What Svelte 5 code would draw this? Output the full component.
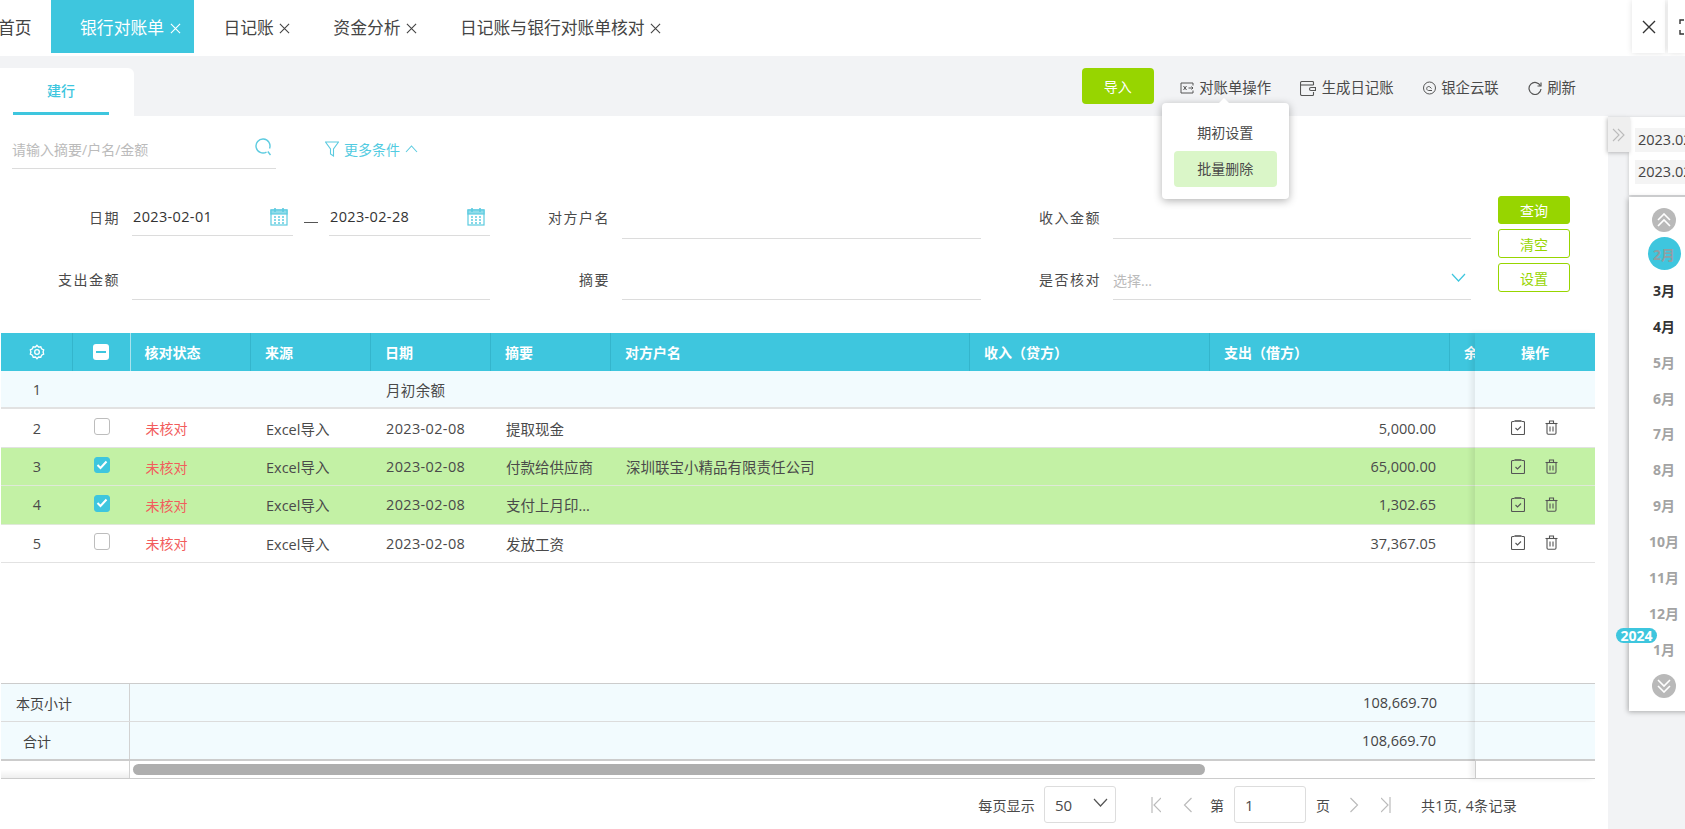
<script lang="ts">
  const tabs = [
    { name: '首页', closable: false },
    { name: '银行对账单', closable: true, active: true },
    { name: '日记账', closable: true },
    { name: '资金分析', closable: true },
    { name: '日记账与银行对账单核对', closable: true }
  ];

  const columns = [
    { label: '', w: 72 },
    { label: '', w: 57.5 },
    { label: '核对状态', w: 120.5 },
    { label: '来源', w: 120 },
    { label: '日期', w: 120 },
    { label: '摘要', w: 120 },
    { label: '对方户名', w: 359 },
    { label: '收入（贷方）', w: 240 },
    { label: '支出（借方）', w: 240 },
    { label: '余额', w: 240 }
  ];
  const gridCols = columns.map((c) => c.w + 'px').join(' ');

  const rows = [
    { no: 1, kind: 'opening', h: 38, date: '', summary: '月初余额' },
    { no: 2, h: 39, date: '2023-02-08', summary: '提取现金', party: '', out: '5,000.00' },
    { no: 3, h: 38, checked: true, date: '2023-02-08', summary: '付款给供应商', party: '深圳联宝小精品有限责任公司', out: '65,000.00' },
    { no: 4, h: 38.5, checked: true, date: '2023-02-08', summary: '支付上月印...', party: '', out: '1,302.65' },
    { no: 5, h: 38, date: '2023-02-08', summary: '发放工资', party: '', out: '37,367.05' }
  ];

  const months = ['2月', '3月', '4月', '5月', '6月', '7月', '8月', '9月', '10月', '11月', '12月', '1月'];
</script>

{#snippet closeIcon(size)}
  <svg class="close" width={size} height={size} viewBox="0 0 12 12" fill="none" stroke="currentColor" stroke-width="1.2">
    <path d="M1 1l10 10M11 1L1 11" />
  </svg>
{/snippet}

{#snippet calendar()}
  <svg width="18" height="19" viewBox="0 0 18 19" fill="none" stroke="#5ccbe0" stroke-width="1.2">
    <rect x="1" y="3" width="16" height="15" fill="#fff" />
    <rect x="1" y="3" width="16" height="4" fill="#8edcea" />
    <path d="M5 1v4M13 1v4" stroke-width="1.6" />
    <path d="M4 10h2M8 10h2M12 10h2M4 13h2M8 13h2M12 13h2M4 16h2M8 16h2M12 16h2" stroke-width="1.4" />
  </svg>
{/snippet}

{#snippet clipboard()}
  <svg width="14" height="15" viewBox="0 0 14 15" fill="none" stroke="#555" stroke-width="1.1">
    <path d="M3.5 1.5H1.5a1 1 0 0 0-1 1v11a1 1 0 0 0 1 1h11a1 1 0 0 0 1-1v-11a1 1 0 0 0-1-1h-2" />
    <path d="M3.5 1h7" stroke-width="1.6" />
    <path d="M4.5 8l2 2 3.5-3.5" />
  </svg>
{/snippet}

{#snippet trash()}
  <svg width="13" height="15" viewBox="0 0 13 15" fill="none" stroke="#555" stroke-width="1.1">
    <path d="M0.5 3.5h12" />
    <path d="M4.5 3.5V1h4v2.5" />
    <path d="M2 3.5v9.5a1.2 1.2 0 0 0 1.2 1.2h6.6A1.2 1.2 0 0 0 11 13V3.5" />
    <path d="M5 6.5v5M8 6.5v5" />
  </svg>
{/snippet}

<div class="page">
  <header class="tabbar">
    <nav class="tabs">
      {#each tabs as tab}
        <div class="tab" class:active={tab.active} class:plain={!tab.closable}>
          <span>{tab.name}</span>
          {#if tab.closable}{@render closeIcon(11)}{/if}
        </div>
      {/each}
    </nav>
    <div class="win-btns">
      <div class="win-btn">
        <svg width="16" height="16" viewBox="0 0 16 16" fill="none" stroke="#333" stroke-width="1.4"><path d="M2 2l12 12M14 2L2 14" /></svg>
      </div>
      <div class="win-btn wide">
        <svg width="16" height="16" viewBox="0 0 16 16" fill="none" stroke="#333" stroke-width="1.4"><path d="M1 5V1h4M11 1h4v4M15 11v4h-4M5 15H1v-4" /></svg>
      </div>
    </div>
  </header>

  <div class="toolbar">
    <div class="subtab"><div class="subtab-label">建行</div></div>
    <div class="actions">
      <button class="btn-import">导入</button>
      <div class="action has-menu">
        <svg width="14" height="12" viewBox="0 0 14 12" fill="none" stroke="#555" stroke-width="1"><path d="M13 3.500V1H1v10h12V8.500" /><path d="M3.500 4l3 4M6.500 4l-3 4" /><path d="M8.500 6H13M11.500 4.500L13 6l-1.500 1.500" /></svg>
        <span>对账单操作</span>
        <div class="menu">
          <div class="menu-item">期初设置</div>
          <div class="menu-item hover">批量删除</div>
        </div>
      </div>
      <div class="action">
        <svg width="16" height="15" viewBox="0 0 16 15" fill="none" stroke="#555" stroke-width="1.100"><path d="M13.500 4V1.500a1 1 0 0 0-1-1H2a1.500 1.500 0 0 0-1.500 1.500v11A1.500 1.500 0 0 0 2 14.500h10.500a1 1 0 0 0 1-1V11" /><path d="M0.500 4h13" /><path d="M15.500 6.500H11a1 1 0 0 0 0 3h4.500z" fill="#f2f3f5" /></svg>
        <span>生成日记账</span>
      </div>
      <div class="action">
        <svg width="13" height="14" viewBox="0 0 13 14" fill="none" stroke="#555" stroke-width="1"><circle cx="6.500" cy="7" r="6" /><path d="M9 9.500H5.500a2 2 0 1 1 1.500-3.500l1.500 1.500" /></svg>
        <span>银企云联</span>
      </div>
      <div class="action">
        <svg width="14" height="14" viewBox="0 0 14 14" fill="none" stroke="#555" stroke-width="1.200"><path d="M12.500 5A6 6 0 1 0 13 8" /><path d="M13 1.500V5H9.500" /></svg>
        <span>刷新</span>
      </div>
    </div>
  </div>

  <div class="content">
    <main class="main">
      <div class="search-row">
        <div class="search">
          <span>请输入摘要/户名/金额</span>
          <svg width="18" height="18" viewBox="0 0 18 18" fill="none" stroke="#5ccbe0" stroke-width="1.400"><path d="M11.500 14.060A7 7 0 1 1 14.580 10.390" /><path d="M12.800 13.500l2.700 3.500" /></svg>
        </div>
        <div class="more">
          <svg width="14" height="16" viewBox="0 0 14 16" fill="none" stroke="#5ccbe0" stroke-width="1.100"><path d="M0.500 1h13L8.500 8v7l-3-2V8z" /></svg>
          <span>更多条件</span>
          <svg width="13" height="8" viewBox="0 0 13 8" fill="none" stroke="#5ccbe0" stroke-width="1.100"><path d="M1 7l5.500-6L12 7" /></svg>
        </div>
      </div>

      <div class="form">
        <label class="lbl up">日期</label>
        <div class="dates">
          <div class="date-input"><span>2023-02-01</span>{@render calendar()}</div>
          <span class="dash"></span>
          <div class="date-input"><span>2023-02-28</span>{@render calendar()}</div>
        </div>
        <label class="lbl up">对方户名</label>
        <div class="field"></div>
        <label class="lbl up">收入金额</label>
        <div class="field"></div>
        <div class="form-btns">
          <button class="btn solid">查询</button>
          <button class="btn">清空</button>
          <button class="btn">设置</button>
        </div>

        <label class="lbl low">支出金额</label>
        <div class="field"></div>
        <label class="lbl low">摘要</label>
        <div class="field"></div>
        <label class="lbl low">是否核对</label>
        <div class="field select">
          <span>选择...</span>
          <svg width="15" height="9" viewBox="0 0 15 9" fill="none" stroke="#3ec6de" stroke-width="1.200"><path d="M1 1l6.500 7L14 1" /></svg>
        </div>
      </div>

      <div class="table">
        <div class="scroll-part">
          <div class="thead" style="grid-template-columns:{gridCols}">
            <div class="th center">
              <svg width="16" height="16" viewBox="0 0 24 24" fill="none" stroke="#fff" stroke-width="2"><circle cx="12" cy="12" r="3.500" /><path d="M12 2l2.300 2.600 3.400-.5 1.200 3.200 3.100 1.500-.9 3.200.9 3.300-3.100 1.400-1.200 3.200-3.400-.4L12 22l-2.300-2.500-3.400.4-1.200-3.200-3.100-1.400.9-3.300-.9-3.200 3.100-1.500 1.200-3.200 3.400.5z" /></svg>
            </div>
            <div class="th center light">
              <span class="check-head"></span>
            </div>
            {#each columns.slice(2) as col}
              <div class="th">{col.label}</div>
            {/each}
          </div>

          {#each rows as row}
            <div class="tr" class:opening={row.kind === 'opening'} class:selected={row.checked} style="grid-template-columns:{gridCols};height:{row.h}px">
              <div class="td center">{row.no}</div>
              <div class="td center">
                {#if row.kind !== 'opening'}
                  <span class="checkbox" class:on={row.checked}>
                    {#if row.checked}
                      <svg width="12" height="10" viewBox="0 0 12 10" fill="none" stroke="#fff" stroke-width="2"><path d="M1.500 5l3 3 6-6.500" /></svg>
                    {/if}
                  </span>
                {/if}
              </div>
              <div class="td status">{row.kind === 'opening' ? '' : '未核对'}</div>
              <div class="td">{row.kind === 'opening' ? '' : 'Excel导入'}</div>
              <div class="td date">{row.kind === 'opening' ? '月初余额' : row.date}</div>
              <div class="td">{row.kind === 'opening' ? '' : row.summary}</div>
              <div class="td">{row.party ?? ''}</div>
              <div class="td"></div>
              <div class="td amount">{row.out ?? ''}</div>
              <div class="td"></div>
            </div>
          {/each}

          <div class="spacer"></div>

          <div class="foot first">
            <div class="foot-label">本页小计</div>
            <div class="foot-amount">108,669.70</div>
          </div>
          <div class="foot second">
            <div class="foot-label indent">合计</div>
            <div class="foot-amount shifted">108,669.70</div>
          </div>
          <div class="scrollbar">
            <div class="scroll-corner"></div>
            <div class="scroll-track"><div class="scroll-thumb"></div></div>
          </div>
        </div>

        <div class="fixed-part">
          <div class="fixed-head">操作</div>
          {#each rows as row}
            <div class="fixed-row" class:opening={row.kind === 'opening'} class:selected={row.checked} style="height:{row.h}px">
              {#if row.kind !== 'opening'}
                {@render clipboard()}
                {@render trash()}
              {/if}
            </div>
          {/each}
          <div class="spacer"></div>
          <div class="fixed-foot first"></div>
          <div class="fixed-foot second"></div>
          <div class="fixed-scroll"></div>
        </div>
      </div>

      <div class="pager">
        <span class="per-page">每页显示</span>
        <div class="page-size">
          <span>50</span>
          <svg width="15" height="9" viewBox="0 0 15 9" fill="none" stroke="#555" stroke-width="1.200"><path d="M1 1l6.500 7L14 1" /></svg>
        </div>
        <svg class="first-page" width="10" height="16" viewBox="0 0 10 16" fill="none" stroke="#bbb" stroke-width="1.200"><path d="M1 0v16M10 1L3 8l7 7" /></svg>
        <svg class="prev-page" width="9" height="16" viewBox="0 0 9 16" fill="none" stroke="#bbb" stroke-width="1.200"><path d="M8.500 1L1.500 8l7 7" /></svg>
        <span class="page-word">第</span>
        <div class="page-input">1</div>
        <span class="page-word after">页</span>
        <svg class="next-page" width="9" height="16" viewBox="0 0 9 16" fill="none" stroke="#bbb" stroke-width="1.200"><path d="M0.500 1l7 7-7 7" /></svg>
        <svg class="last-page" width="10" height="16" viewBox="0 0 10 16" fill="none" stroke="#bbb" stroke-width="1.200"><path d="M9 0v16M0 1l7 7-7 7" /></svg>
        <span class="total">共1页, 4条记录</span>
      </div>
    </main>

    <aside class="side">
      <div class="drawer">
        <div class="handle">
          <svg width="14" height="14" viewBox="0 0 14 14" fill="none" stroke="#bbb" stroke-width="1.100"><path d="M1 1l6 6-6 6M6 1l6 6-6 6" /></svg>
        </div>
        <div class="panel-top">
          <div class="chip">2023.02.01</div>
          <div class="chip">2023.02.28</div>
        </div>
        <div class="panel-months">
          <div class="round">
            <svg width="14" height="14" viewBox="0 0 14 14" fill="none" stroke="#fff" stroke-width="1.600"><path d="M1 7l6-6 6 6M1 13l6-6 6 6" /></svg>
          </div>
          <div class="month-list">
            {#each months as m, i}
              <div class="month" class:current={i === 0} class:near={i === 1 || i === 2}><span>{m}</span></div>
            {/each}
          </div>
          <div class="round">
            <svg width="14" height="14" viewBox="0 0 14 14" fill="none" stroke="#fff" stroke-width="1.600"><path d="M1 1l6 6 6-6M1 7l6 6 6-6" /></svg>
          </div>
          <div class="year">2024</div>
        </div>
      </div>
    </aside>
  </div>
</div>

<style>
  :global(body) {
    margin: 0;
    background: #fff;
  }

  .page {
    --accent: #3ec6de;
    --green: #97d500;
    width: 1685px;
    height: 829px;
    overflow: hidden;
    display: flex;
    flex-direction: column;
    font-family: "Open Sans", "Noto Sans CJK SC", sans-serif;
    font-size: 14.5px;
    color: #4a4a4a;
  }

  button {
    font: inherit;
    cursor: pointer;
  }

  /* top tab strip */
  .tabbar {
    height: 56px;
    flex: none;
    display: flex;
    justify-content: space-between;
  }

  .tabs {
    display: flex;
    margin-left: -2px;
    height: 53px;
  }

  .tab {
    display: flex;
    align-items: center;
    gap: 5.5px;
    padding: 1px 13.5px 0 29.5px;
    font-size: 16.8px;
    color: #444;
    white-space: nowrap;
  }

  .tab.plain {
    padding: 1px 19px 0 0;
  }

  .tab.active {
    background: var(--accent);
    color: #fff;
    padding-left: 29.5px;
  }

  .close {
    flex: none;
    margin-top: 2px;
  }

  .win-btns {
    display: flex;
    gap: 3px;
    height: 53px;
  }

  .win-btn {
    width: 33px;
    box-sizing: border-box;
    display: flex;
    align-items: center;
    justify-content: center;
    background: #fff;
    box-shadow: 0 0 6px rgba(0, 0, 0, 0.12);
  }

  .win-btn.wide {
    width: 17px;
    justify-content: flex-start;
    padding-left: 11px;
    overflow: hidden;
  }

  .win-btn svg {
    flex: none;
  }

  /* grey action bar */
  .toolbar {
    height: 60px;
    flex: none;
    display: flex;
    justify-content: space-between;
    background: #f2f3f5;
  }

  .subtab {
    width: 134px;
    margin-top: 12px;
    padding-left: 13px;
    box-sizing: border-box;
    background: #fff;
    border-radius: 0 6px 0 0;
  }

  .subtab-label {
    width: 96px;
    height: 47px;
    box-sizing: border-box;
    padding-bottom: 1px;
    display: flex;
    align-items: center;
    justify-content: center;
    border-bottom: 3px solid var(--accent);
    color: var(--accent);
    font-size: 14px;
    font-weight: 500;
  }

  .actions {
    display: flex;
    align-items: center;
    gap: 29px;
    padding-right: 109px;
  }

  .btn-import {
    width: 72px;
    height: 36px;
    align-self: flex-start;
    margin: 12px -3px 0 0;
    border: 0;
    border-radius: 4px;
    background: var(--green);
    color: #fff;
    font-size: 14px;
  }

  .action {
    position: relative;
    display: flex;
    align-items: center;
    gap: 5.5px;
    margin-top: 4px;
    font-size: 14.4px;
    line-height: 20px;
    color: #4a4a4a;
    white-space: nowrap;
  }

  .menu {
    position: absolute;
    z-index: 20;
    top: 25px;
    left: -18px;
    width: 127px;
    height: 96px;
    box-sizing: border-box;
    padding: 12px 12px 0;
    background: #fff;
    border-radius: 4px;
    box-shadow: 0 2px 8px rgba(0, 0, 0, 0.3);
    color: #4a4a4a;
  }

  .menu::before {
    content: '';
    position: absolute;
    top: -5px;
    left: 57px;
    border: 5px solid transparent;
    border-top: 0;
    border-bottom-color: #fff;
  }

  .menu-item {
    height: 36px;
    display: flex;
    align-items: center;
    justify-content: center;
    border-radius: 4px;
    font-size: 14px;
  }

  .menu-item.hover {
    background: #daf6c8;
  }

  .content {
    flex: 1;
    display: flex;
    min-height: 0;
  }

  .main {
    width: 1608px;
    flex: none;
    display: flex;
    flex-direction: column;
    background: #fff;
  }

  /* search + filter */
  .search-row {
    height: 53px;
    display: flex;
    align-items: flex-end;
    padding-left: 12px;
  }

  .search {
    width: 264px;
    height: 38px;
    box-sizing: border-box;
    display: flex;
    align-items: center;
    justify-content: space-between;
    padding: 0 3px 2px 0;
    border-bottom: 1px solid #dcdcdc;
    color: #bbb;
    font-size: 14px;
  }

  .search svg {
    margin-top: -3px;
  }

  .more {
    display: flex;
    align-items: center;
    gap: 5px;
    margin: 0 0 10px 49px;
    color: #52cbe1;
    font-size: 14px;
  }

  /* form grid */
  .form {
    display: grid;
    grid-template-columns: 132px 358px 132px 359px 132px 358px 99px;
    grid-template-rows: 70px 61px;
    align-items: end;
  }

  .lbl {
    height: 38px;
    line-height: 38px;
    padding-right: 12px;
    text-align: right;
    font-size: 14px;
    letter-spacing: 1.5px;
    color: #4a4a4a;
  }

  .lbl.up {
    margin-bottom: 2px;
  }

  .lbl.low {
    margin-bottom: 1px;
  }

  .field {
    height: 38px;
    box-sizing: border-box;
    border-bottom: 1px solid #dcdcdc;
  }

  .field.select {
    display: flex;
    align-items: center;
    justify-content: space-between;
    padding: 0 5px 2px 0;
    color: #bbb;
    font-size: 14px;
  }

  .field.select svg {
    margin: -4px 0 0;
  }

  .dates {
    display: flex;
    align-items: flex-end;
    height: 38px;
    padding-bottom: 3px;
    box-sizing: border-box;
  }

  .date-input {
    flex: 1;
    height: 35px;
    box-sizing: border-box;
    display: flex;
    align-items: center;
    justify-content: space-between;
    padding: 0 5px 4px 1px;
    border-bottom: 1px solid #dcdcdc;
    color: #333;
    letter-spacing: 0.35px;
  }

  .dash {
    flex: none;
    width: 14px;
    height: 1px;
    margin: 0 11px 13px;
    background: #555;
  }

  .form-btns {
    grid-column: 7;
    grid-row: 1 / span 2;
    justify-self: end;
    align-self: start;
    margin-top: 27px;
    display: flex;
    flex-direction: column;
    gap: 5px;
  }

  .btn {
    width: 72px;
    height: 29px;
    padding: 0;
    border: 1px solid var(--green);
    border-radius: 3px;
    background: #fff;
    color: var(--green);
    font-size: 14px;
  }

  .btn.solid {
    height: 28px;
    background: var(--green);
    color: #fff;
  }

  /* table */
  .table {
    display: flex;
    width: 1594px;
    height: 446px;
    margin: 33px 0 0 1px;
  }

  .scroll-part {
    width: 1474px;
    flex: none;
    overflow: hidden;
    display: flex;
    flex-direction: column;
  }

  .thead {
    height: 38px;
    flex: none;
    display: grid;
    background: var(--accent);
  }

  .th {
    display: flex;
    align-items: center;
    padding-left: 14px;
    border-right: 1px solid #34b5cc;
    color: #fff;
    font-size: 14px;
    font-weight: 700;
    white-space: nowrap;
  }

  .th.center {
    justify-content: center;
    padding: 0;
  }

  .th.light {
    border-right-color: #a8e3ee;
  }

  .check-head {
    position: relative;
    width: 16px;
    height: 16px;
    background: #fff;
    border-radius: 3px;
  }

  .check-head::after {
    content: '';
    position: absolute;
    left: 3px;
    right: 3px;
    top: 7px;
    height: 2px;
    background: var(--accent);
  }

  .tr {
    flex: none;
    display: grid;
    box-sizing: border-box;
    border-bottom: 1px solid #e2e2e2;
  }

  .tr.opening,
  .fixed-row.opening {
    background: #f2fbfe;
    border-bottom: 2px solid #e2e2e2;
  }

  .tr.selected,
  .fixed-row.selected {
    background: #c3f1a5;
    border-bottom-color: #dfe9d8;
  }

  .td {
    display: flex;
    align-items: center;
    padding-left: 15px;
    white-space: nowrap;
    overflow: hidden;
  }

  .td.center {
    justify-content: center;
    padding: 0;
  }

  .td.status {
    color: #f25c5c;
    font-size: 14px;
  }

  .td.date {
    letter-spacing: 0.35px;
  }

  .td.amount {
    justify-content: flex-end;
    padding-right: 14px;
  }

  .checkbox {
    width: 16.5px;
    height: 16.5px;
    box-sizing: border-box;
    margin-top: -3px;
    display: flex;
    align-items: center;
    justify-content: center;
    background: #fff;
    border: 1px solid #bdbdbd;
    border-radius: 3px;
  }

  .checkbox.on {
    background: var(--accent);
    border-color: var(--accent);
  }

  .spacer {
    flex: 1;
  }

  .foot {
    flex: none;
    display: flex;
    align-items: center;
    box-sizing: border-box;
    background: #f2fbfe;
    border-bottom: 1px solid #dcdcdc;
  }

  .foot.first {
    height: 39px;
    border-top: 1px solid #ccc;
  }

  .foot.second {
    height: 39px;
    border-bottom: 2px solid #ccc;
  }

  .foot-label {
    width: 129px;
    height: 100%;
    flex: none;
    box-sizing: border-box;
    display: flex;
    align-items: center;
    padding-left: 15px;
    border-right: 1px solid #d2d2d2;
    font-size: 14px;
    color: #444;
  }

  .foot-label.indent {
    padding-left: 22px;
  }

  .foot-amount {
    margin-left: auto;
    margin-right: 38px;
    color: #444;
  }

  .foot-amount.shifted {
    margin-right: 39px;
  }

  .scrollbar {
    flex: none;
    height: 18px;
    display: flex;
    box-sizing: border-box;
    border-bottom: 1px solid #ccc;
  }

  .scroll-corner {
    width: 129px;
    flex: none;
    box-sizing: border-box;
    background: linear-gradient(#fff 50%, #eee);
    border-right: 1px solid #d2d2d2;
  }

  .scroll-track {
    flex: 1;
    padding: 3px 0 0 3px;
  }

  .scroll-thumb {
    width: 1072px;
    height: 11px;
    border-radius: 6px;
    background: #aeaeae;
  }

  .fixed-part {
    width: 120px;
    flex: none;
    position: relative;
    z-index: 2;
    display: flex;
    flex-direction: column;
    background: #fff;
    box-shadow: -4px 0 5px rgba(0, 0, 0, 0.07);
  }

  .fixed-head {
    height: 38px;
    flex: none;
    display: flex;
    align-items: center;
    justify-content: center;
    background: var(--accent);
    color: #fff;
    font-size: 14px;
    font-weight: 700;
  }

  .fixed-row {
    flex: none;
    box-sizing: border-box;
    display: flex;
    align-items: center;
    gap: 20px;
    padding: 0 0 1px 36px;
    border-bottom: 1px solid #e2e2e2;
  }

  .fixed-foot {
    flex: none;
    box-sizing: border-box;
    height: 39px;
    background: #f2fbfe;
    border-bottom: 1px solid #dcdcdc;
  }

  .fixed-foot.first {
    border-top: 1px solid #ccc;
  }

  .fixed-foot.second {
    border-bottom: 2px solid #ccc;
  }

  .fixed-scroll {
    flex: none;
    height: 18px;
    box-sizing: border-box;
    border-left: 1px solid #ccc;
    border-bottom: 1px solid #ccc;
  }

  /* pagination */
  .pager {
    flex: 1;
    display: flex;
    align-items: center;
    justify-content: flex-end;
    padding: 1px 91px 0 0;
    font-size: 14px;
    color: #4a4a4a;
  }

  .per-page {
    letter-spacing: 0.2px;
  }

  .page-size {
    width: 72px;
    height: 37px;
    box-sizing: border-box;
    margin-left: 9px;
    display: flex;
    align-items: center;
    justify-content: space-between;
    padding: 0 7px 0 10px;
    border: 1px solid #ddd;
    border-radius: 3px;
    font-size: 15px;
  }

  .page-size svg {
    margin-top: -4px;
  }

  .first-page {
    margin-left: 35px;
  }

  .prev-page {
    margin-left: 22px;
  }

  .page-word {
    margin-left: 18px;
  }

  .page-word.after {
    margin-left: 10px;
  }

  .page-input {
    width: 72px;
    height: 37px;
    box-sizing: border-box;
    margin-left: 10px;
    display: flex;
    align-items: center;
    padding-left: 10px;
    border: 1px solid #ddd;
    border-radius: 3px;
    font-size: 15px;
  }

  .next-page {
    margin-left: 20px;
  }

  .last-page {
    margin-left: 22px;
  }

  .total {
    margin-left: 30px;
    letter-spacing: 0.3px;
  }

  /* month drawer on the right */
  .side {
    flex: 1;
    position: relative;
    background: #f2f3f5;
  }

  .drawer {
    position: absolute;
    top: 1px;
    left: 21px;
    width: 70px;
  }

  .handle {
    position: absolute;
    z-index: 1;
    top: 0;
    left: -21px;
    width: 22px;
    height: 35px;
    display: flex;
    align-items: center;
    justify-content: center;
    background: #efefef;
    box-shadow: -1px 1px 4px rgba(0, 0, 0, 0.25);
  }

  .panel-top {
    height: 78px;
    box-sizing: border-box;
    padding: 11px 0 0 6px;
    display: flex;
    flex-direction: column;
    gap: 8px;
    background: #fff;
    box-shadow: 0 1px 4px rgba(0, 0, 0, 0.2);
  }

  .chip {
    width: 64px;
    height: 24px;
    padding-left: 3px;
    line-height: 24px;
    background: #f4f4f4;
    font-size: 14.5px;
    color: #444;
    white-space: nowrap;
  }

  .panel-months {
    position: relative;
    margin-top: 2px;
    padding: 11px 0 13px;
    display: flex;
    flex-direction: column;
    align-items: center;
    background: #fff;
    box-shadow: -1px 1px 5px rgba(0, 0, 0, 0.3);
  }

  .round {
    width: 24px;
    height: 24px;
    display: flex;
    align-items: center;
    justify-content: center;
    border-radius: 50%;
    background: #b9b9b9;
  }

  .month-list {
    margin: 4px 0 7px;
    display: flex;
    flex-direction: column;
    align-items: center;
  }

  .month {
    height: 35.9px;
    display: flex;
    align-items: center;
    justify-content: center;
    font-size: 14px;
    font-weight: 700;
    color: #a3a3a3;
  }

  .month.near {
    color: #333;
  }

  .month.current span {
    width: 33px;
    height: 33px;
    display: flex;
    align-items: center;
    justify-content: center;
    border-radius: 50%;
    background: var(--accent);
    color: #8f9ea3;
  }

  .year {
    position: absolute;
    top: 431px;
    left: -13px;
    width: 41px;
    height: 15px;
    display: flex;
    align-items: center;
    justify-content: center;
    border-radius: 8px;
    background: var(--accent);
    color: #fff;
    font-size: 14px;
    font-weight: 700;
  }
</style>
